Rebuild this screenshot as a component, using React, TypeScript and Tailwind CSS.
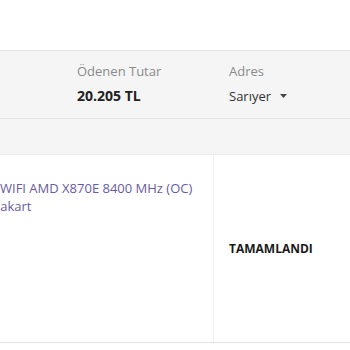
import React from "react";

export default function App() {
  return (
    <div className="w-[350px] h-[350px] bg-white overflow-hidden font-['Open_Sans',_'Liberation_Sans',_sans-serif]">
      <div className="h-[50px]" />
      <div className="h-[69px] bg-[#f5f5f5] border-t border-b border-[#e3e3e3] flex">
        <div className="w-[61px] shrink-0" />
        <div className="w-[153px] shrink-0 pl-4 pt-[11px]">
          <div className="text-[13px] leading-[18px] text-[#8a8a8a]">Ödenen Tutar</div>
          <div className="mt-[7px] text-[14px] leading-[18px] font-bold text-[#222]">20.205 TL</div>
        </div>
        <div className="pl-[15px] pt-[11px]">
          <div className="text-[13px] leading-[18px] text-[#8a8a8a]">Adres</div>
          <div className="mt-[7px] text-[13px] leading-[18px] text-[#333] flex items-center">
            <span>Sarıyer</span>
            <svg className="ml-[9px]" width="7" height="4" viewBox="0 0 7 4">
              <path d="M0 0 L7 0 L3.5 4 Z" fill="#444" />
            </svg>
          </div>
        </div>
      </div>
      <div className="h-[36px] bg-[#f5f5f5] border-b border-[#ececec]" />
      <div className="h-[188px] flex border-b border-[#e3e3e3]">
        <div className="w-[214px] shrink-0 border-r border-[#f0f0f0] overflow-hidden">
          <div className="ml-[-16px] pt-[24px] text-[13px] leading-[18px] text-[#685c9c] whitespace-nowrap">
            <div><span className="ml-[16px]">WIFI AMD X870E 8400 MHz (OC)</span></div>
            <div>Anakart</div>
          </div>
        </div>
        <div className="flex-1 pl-[15px] flex items-center">
          <span className="text-[12px] font-bold text-[#1a1a1a]">TAMAMLANDI</span>
        </div>
      </div>
    </div>
  );
}
